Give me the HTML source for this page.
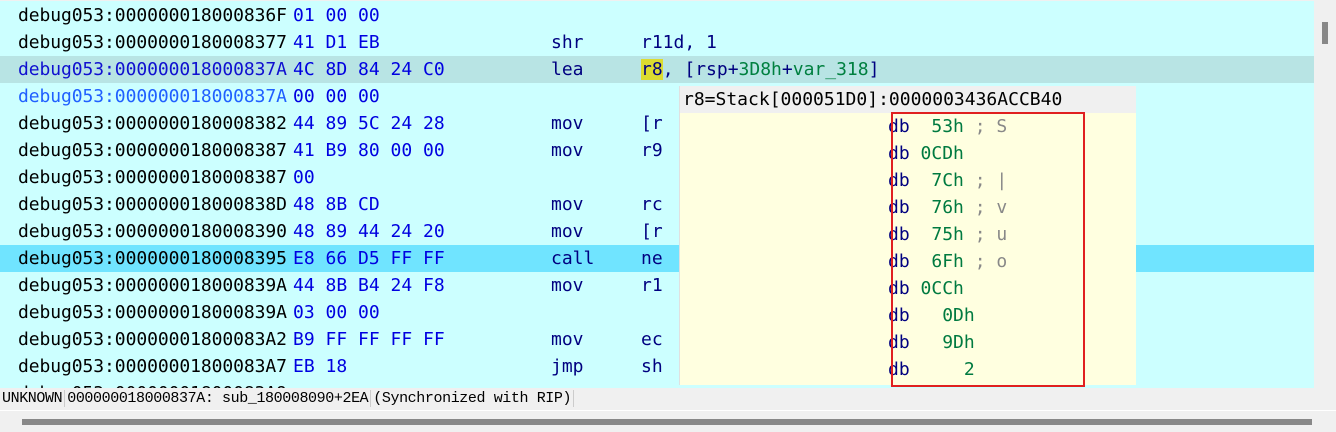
<!DOCTYPE html>
<html><head><meta charset="utf-8"><style>
*{margin:0;padding:0;box-sizing:border-box}
body{width:1336px;height:432px;overflow:hidden;background:#f0f0f0;position:relative;font-family:"DejaVu Sans Mono","Liberation Mono",monospace;font-size:18px}
#lst{position:absolute;left:0;top:1px;width:1314px;height:387px;background:#ccffff;overflow:hidden}
.r{position:absolute;left:0;width:1314px;height:27px;line-height:27px;white-space:pre}
.r span{position:absolute;top:0}
.a{left:18px;color:#000;letter-spacing:-0.08px}
.b{left:293px;color:#0000e0}
.m{left:551px;color:#000080}
.o{left:641px;color:#000080}
.g{color:#008040}
#tip{position:absolute;left:679px;top:86px;width:457px;height:299px;background:#ffffe0;border-left:1px solid #e0e0e0}
#tiph{height:27px;line-height:27px;background:#f0f0f0;padding-left:3px;color:#000;white-space:pre}
.t{position:absolute;left:208px;height:27px;line-height:27px;white-space:pre;color:#000080}
.t .v{color:#007a40}.t .c{color:#888}
#red{position:absolute;left:891px;top:112px;width:194px;height:275px;border:2px solid #e02020}
#vs{position:absolute;left:1314px;top:0;width:22px;height:410px;background:#f0f0f0}
#th{position:absolute;left:1322px;top:22px;width:6px;height:22px;background:#888}
#st{position:absolute;left:0;top:388px;width:1336px;height:22px;font-family:"Liberation Mono",monospace;font-size:15px;line-height:22px;color:#000;white-space:pre;letter-spacing:-0.4px}
#st span{border-right:1px solid #ccc;padding:0 2px}
#hs{position:absolute;left:0;top:410px;width:1336px;height:22px;background:#f0f0f0;border-top:1px solid #fff}
#hth{position:absolute;left:22px;top:8px;width:1290px;height:6px;background:#888}
</style></head><body>
<div id="lst">
<div class="r" style="top:1px"><span class="a">debug053:000000018000836F</span><span class="b">01 00 00</span></div>
<div class="r" style="top:28px"><span class="a">debug053:0000000180008377</span><span class="b">41 D1 EB</span><span class="m">shr</span><span class="o">r11d, 1</span></div>
<div class="r" style="top:55px;background:#b8e4e4"><span class="a" style="color:#1010d0">debug053:000000018000837A</span><span class="b">4C 8D 84 24 C0</span><span class="m">lea</span><span class="o"><b style="font-weight:normal;background:#dcdc30">r8</b>, [rsp+<i class="g" style="font-style:normal">3D8h</i>+<i class="g" style="font-style:normal">var_318</i>]</span></div>
<div class="r" style="top:82px"><span class="a" style="color:#2060ff">debug053:000000018000837A</span><span class="b">00 00 00</span></div>
<div class="r" style="top:109px"><span class="a">debug053:0000000180008382</span><span class="b">44 89 5C 24 28</span><span class="m">mov</span><span class="o">[r</span></div>
<div class="r" style="top:136px"><span class="a">debug053:0000000180008387</span><span class="b">41 B9 80 00 00</span><span class="m">mov</span><span class="o">r9</span></div>
<div class="r" style="top:163px"><span class="a">debug053:0000000180008387</span><span class="b">00</span></div>
<div class="r" style="top:190px"><span class="a">debug053:000000018000838D</span><span class="b">48 8B CD</span><span class="m">mov</span><span class="o">rc</span></div>
<div class="r" style="top:217px"><span class="a">debug053:0000000180008390</span><span class="b">48 89 44 24 20</span><span class="m">mov</span><span class="o">[r</span></div>
<div class="r" style="top:244px;background:#70e4ff"><span class="a">debug053:0000000180008395</span><span class="b">E8 66 D5 FF FF</span><span class="m">call</span><span class="o">ne</span></div>
<div class="r" style="top:271px"><span class="a">debug053:000000018000839A</span><span class="b">44 8B B4 24 F8</span><span class="m">mov</span><span class="o">r1</span></div>
<div class="r" style="top:298px"><span class="a">debug053:000000018000839A</span><span class="b">03 00 00</span></div>
<div class="r" style="top:325px"><span class="a">debug053:00000001800083A2</span><span class="b">B9 FF FF FF FF</span><span class="m">mov</span><span class="o">ec</span></div>
<div class="r" style="top:352px"><span class="a">debug053:00000001800083A7</span><span class="b">EB 18</span><span class="m">jmp</span><span class="o">sh</span></div>
<div class="r" style="top:379px"><span class="a">debug053:00000001800083A9</span></div>
</div>
<div id="tip"><div id="tiph">r8=Stack[000051D0]:0000003436ACCB40</div>
<div class="t" style="top:27px">db  <span class="v">53h</span> <span class="c">; S</span></div>
<div class="t" style="top:54px">db <span class="v">0CDh</span></div>
<div class="t" style="top:81px">db  <span class="v">7Ch</span> <span class="c">; |</span></div>
<div class="t" style="top:108px">db  <span class="v">76h</span> <span class="c">; v</span></div>
<div class="t" style="top:135px">db  <span class="v">75h</span> <span class="c">; u</span></div>
<div class="t" style="top:162px">db  <span class="v">6Fh</span> <span class="c">; o</span></div>
<div class="t" style="top:189px">db <span class="v">0CCh</span></div>
<div class="t" style="top:216px">db  <span class="v"> 0Dh</span></div>
<div class="t" style="top:243px">db  <span class="v"> 9Dh</span></div>
<div class="t" style="top:270px">db  <span class="v">   2</span></div>
</div>
<div id="red"></div>
<div id="vs"></div><div id="th"></div>
<div id="st"><span>UNKNOWN</span><span>000000018000837A: sub_180008090+2EA</span><span>(Synchronized with RIP)</span></div>
<div id="hs"><div id="hth"></div></div>
</body></html>
